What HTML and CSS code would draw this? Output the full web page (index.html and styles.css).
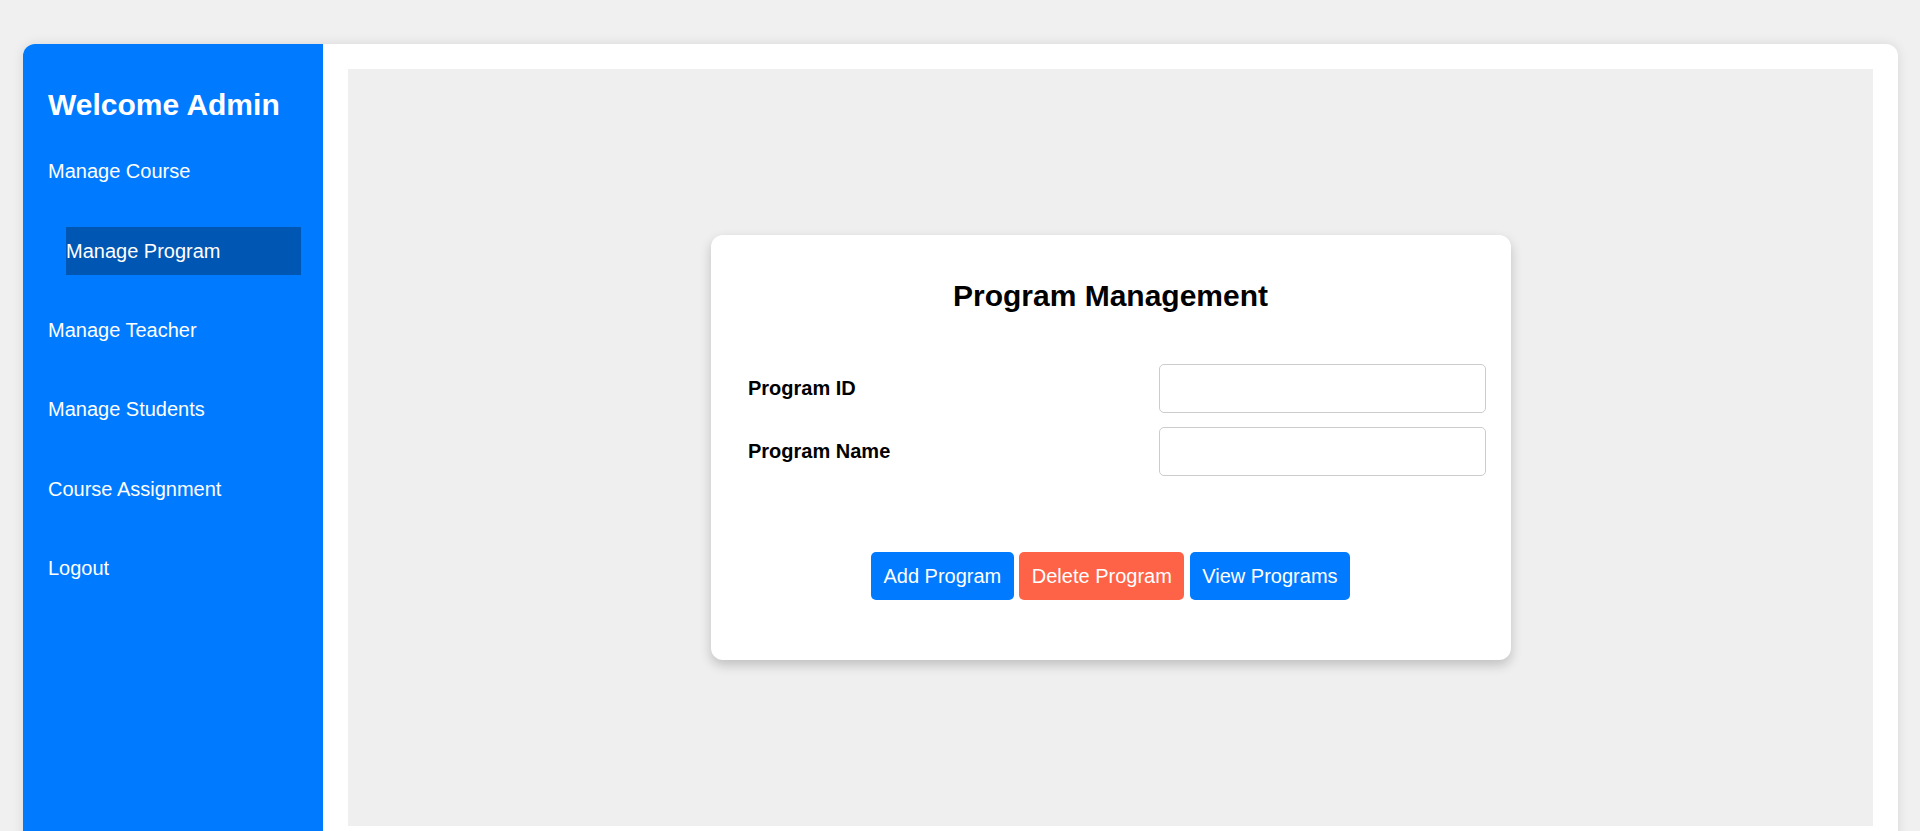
FILE: index.html
```html
<!DOCTYPE html>
<html lang="en">
<head>
<meta charset="UTF-8">
<title>Program Management</title>
<link rel="stylesheet" href="styles.css">
</head>
<body>
<div class="layout">
  <aside class="sidebar">
    <h2 class="sidebar-title">Welcome Admin</h2>
    <ul class="menu">
      <li class="menu-item">Manage Course</li>
      <li class="menu-item active">Manage Program</li>
      <li class="menu-item">Manage Teacher</li>
      <li class="menu-item">Manage Students</li>
      <li class="menu-item">Course Assignment</li>
      <li class="menu-item">Logout</li>
    </ul>
  </aside>
  <main class="main">
    <div class="panel">
      <div class="card">
        <h2 class="card-title">Program Management</h2>
        <form class="form">
          <div class="form-row">
            <label class="form-label" for="pid">Program ID</label>
            <input class="form-input" id="pid" type="text">
          </div>
          <div class="form-row">
            <label class="form-label" for="pname">Program Name</label>
            <input class="form-input" id="pname" type="text">
          </div>
          <div class="actions">
            <button type="button" class="btn btn-blue">Add Program</button>
            <button type="button" class="btn btn-red">Delete Program</button>
            <button type="button" class="btn btn-blue">View Programs</button>
          </div>
        </form>
      </div>
    </div>
  </main>
</div>
</body>
</html>
```

FILE: styles.css
```css
html, body {
  margin: 0;
  padding: 0;
  overflow: hidden;
}

body {
  background: #f0f0f0;
  font-family: "Liberation Sans", Arial, sans-serif;
}

.layout {
  display: flex;
  margin: 44px 22px 0 23px;
  height: 807px;
  background: #ffffff;
  border-radius: 12px;
  overflow: hidden;
  box-shadow: 0 0 12px rgba(0, 0, 0, 0.1);
}

.sidebar {
  width: 300px;
  flex-shrink: 0;
  box-sizing: border-box;
  background: #007bff;
  color: #ffffff;
  padding: 0 25px;
}

.sidebar-title {
  margin: 43.6px 0 25.9px;
  font-size: 30px;
  font-weight: bold;
  line-height: 34.5px;
}

.menu {
  list-style: none;
  margin: 0;
  padding: 0;
  display: flex;
  flex-direction: column;
  gap: 31.3px;
}

.menu-item {
  padding: 12.5px 0;
  font-size: 20px;
  line-height: 23px;
}

.menu-item.active {
  margin-left: 18px;
  width: 235px;
  background: #0056b3;
}

.main {
  flex: 1;
  padding: 25px;
}

.panel {
  height: 757px;
  background: #efefef;
  display: flex;
  align-items: center;
  justify-content: center;
}

.card {
  width: 800px;
  box-sizing: border-box;
  background: #ffffff;
  border-radius: 12px;
  padding: 25px 25px 60px;
  box-shadow: 0 5px 12px rgba(0, 0, 0, 0.2);
}

.card-title {
  margin: 19px 0 50.5px;
  text-align: center;
  font-size: 30px;
  line-height: 34.5px;
  font-weight: bold;
  color: #000000;
}

.form {
  display: flex;
  flex-direction: column;
  gap: 14px;
}

.form-row {
  display: flex;
  align-items: center;
  justify-content: space-between;
  padding-left: 12.5px;
}

.form-label {
  font-size: 20px;
  line-height: 23px;
  font-weight: bold;
  color: #000000;
}

.form-input {
  width: 327px;
  height: 49px;
  box-sizing: border-box;
  border: 1px solid #cccccc;
  border-radius: 5px;
  padding: 12.5px;
  font-size: 20px;
  font-family: inherit;
  background: #ffffff;
  outline: none;
}

.actions {
  display: flex;
  justify-content: center;
  gap: 5.5px;
  margin-top: 62px;
}

.btn {
  border: none;
  border-radius: 5px;
  padding: 12.5px;
  font-family: "Liberation Sans", Arial, sans-serif;
  font-size: 20px;
  line-height: 23px;
  color: #ffffff;
  cursor: pointer;
}

.btn-blue {
  background: #007bff;
}

.btn-red {
  background: #ff6347;
}
```
